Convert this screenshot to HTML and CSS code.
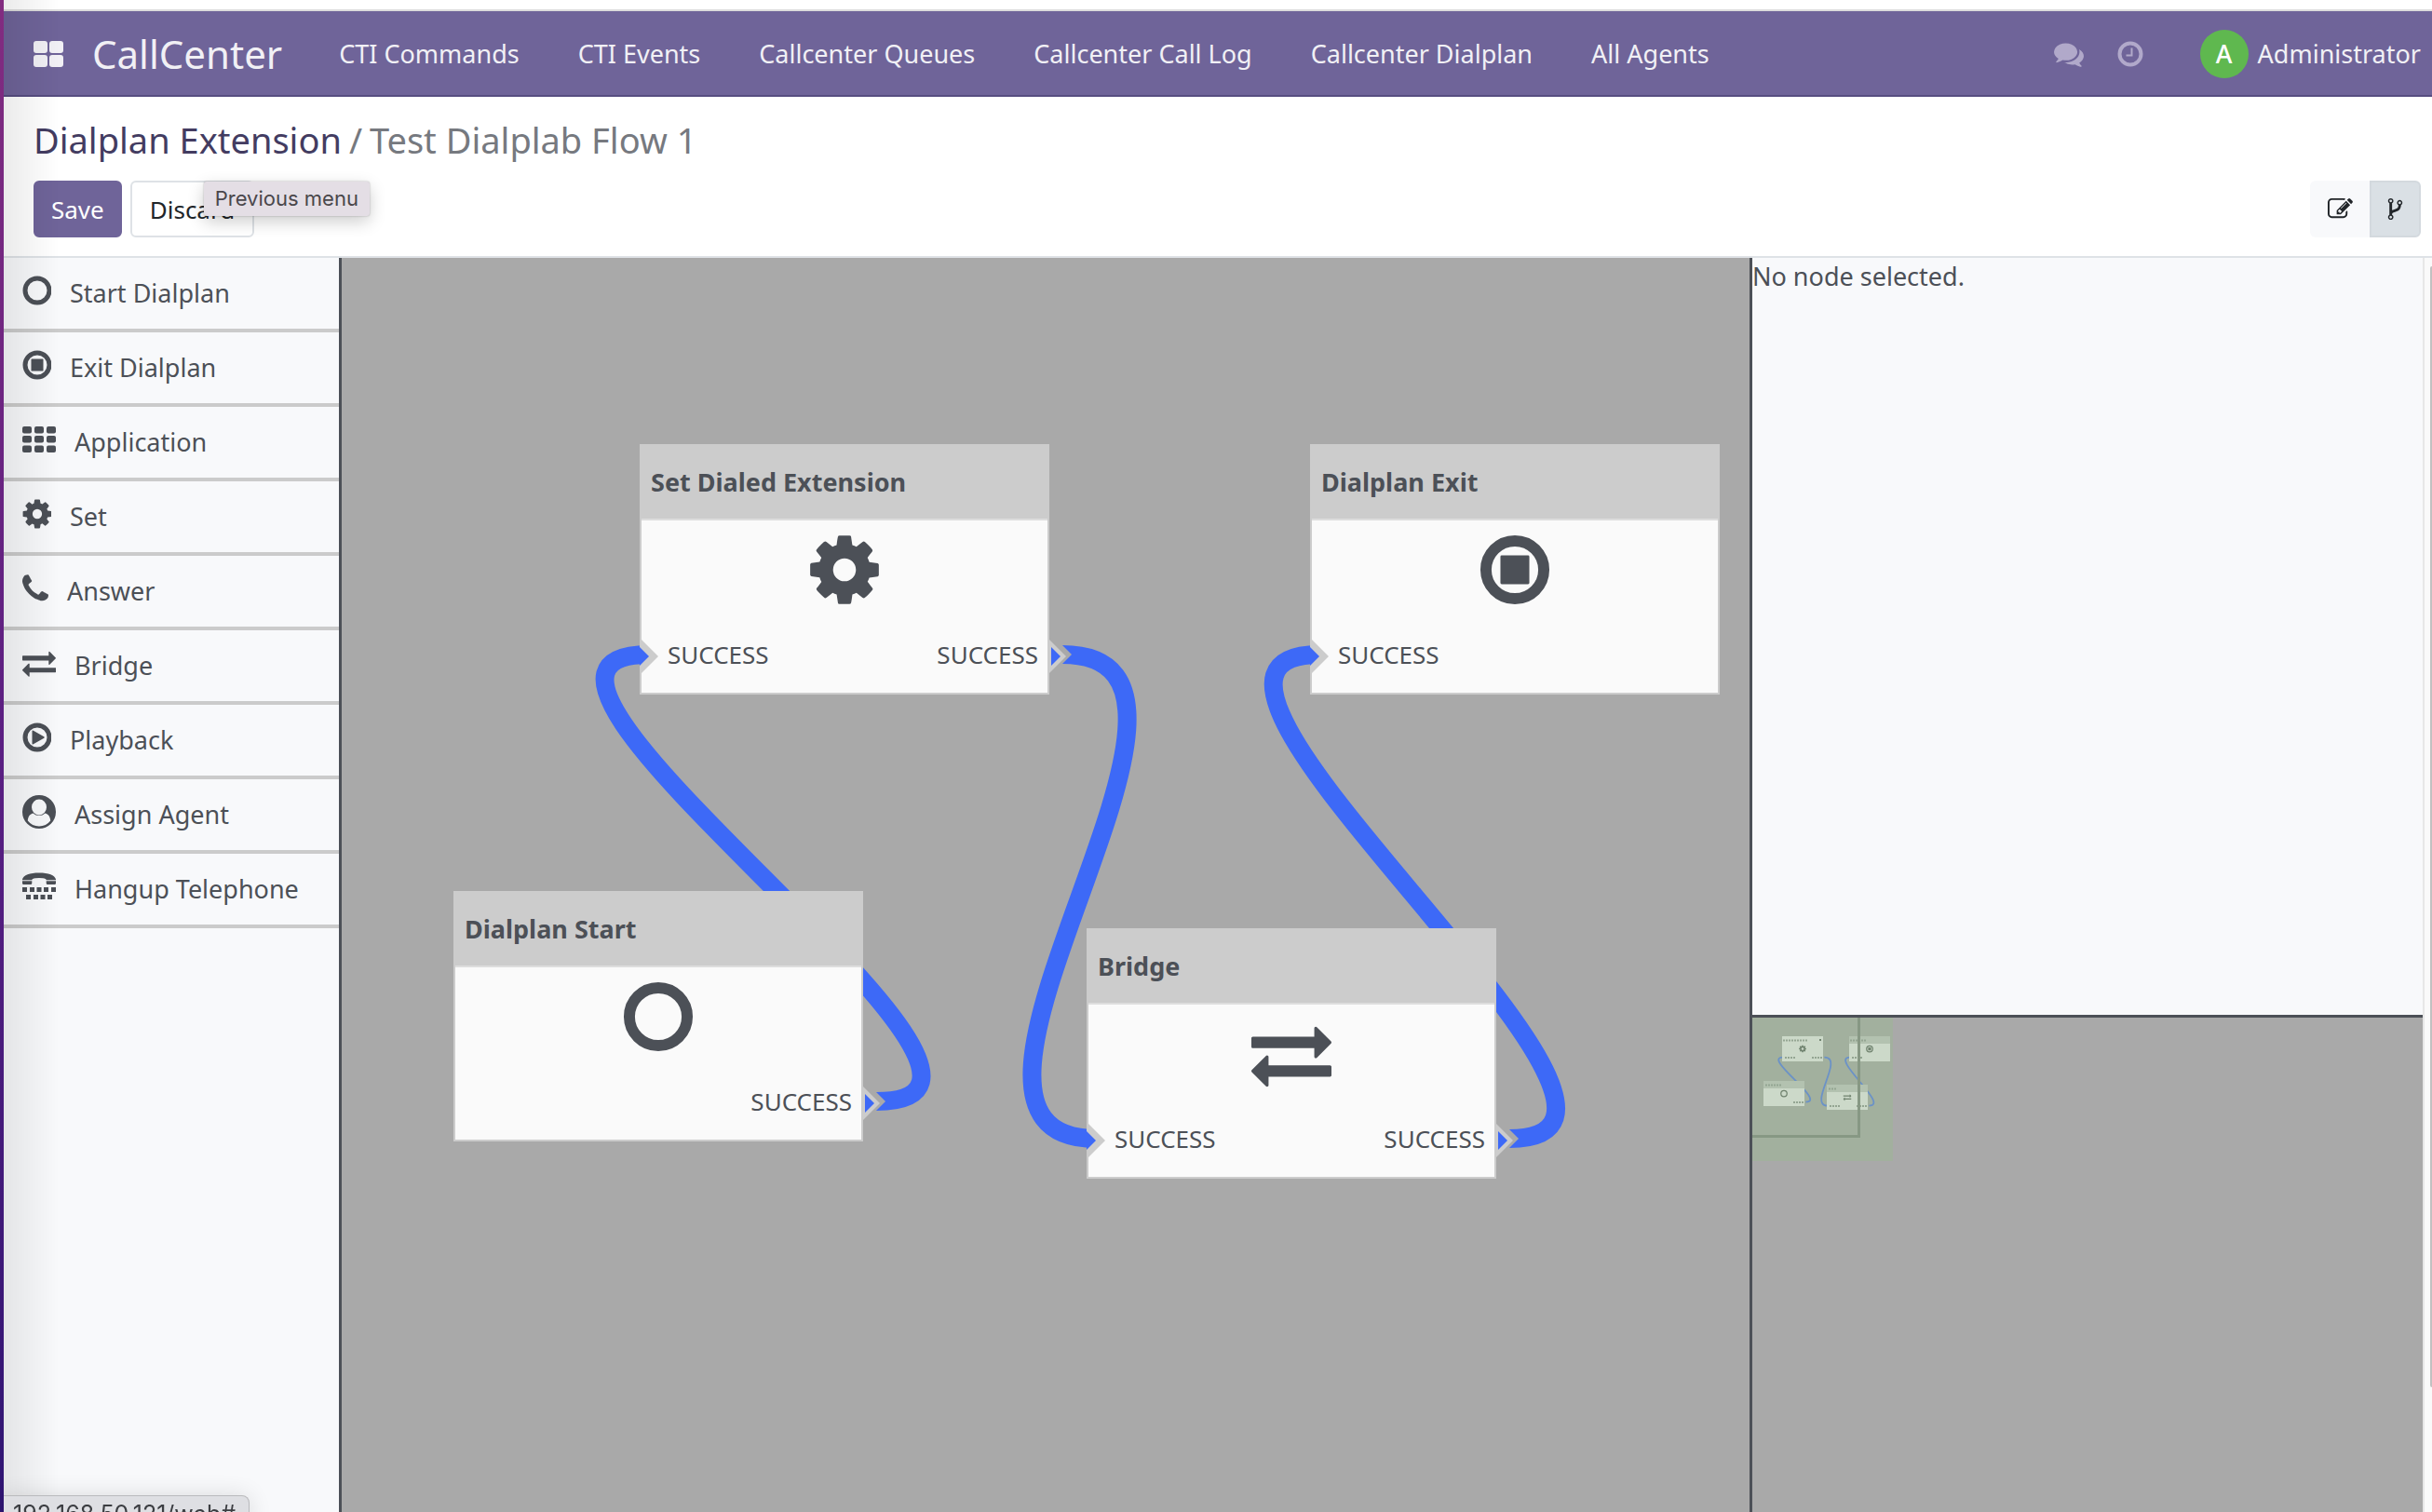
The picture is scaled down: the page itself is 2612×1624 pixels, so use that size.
FILE: index.html
```html
<!DOCTYPE html>
<html lang="en">
<head>
<meta charset="utf-8">
<title>CallCenter - Dialplan Extension</title>
<link rel="stylesheet" href="styles.css">
</head>
<body>
<svg class="defs" aria-hidden="true">
  <symbol id="i-circle" viewBox="0 0 36 36"><circle cx="18" cy="18" r="13" fill="none" stroke="currentColor" stroke-width="5"/></symbol>
  <symbol id="i-stop" viewBox="0 0 36 36"><circle cx="18" cy="18" r="13" fill="none" stroke="currentColor" stroke-width="5"/><rect x="11.500" y="11.500" width="13" height="13" rx="0.6"/></symbol>
  <symbol id="i-play" viewBox="0 0 36 36"><circle cx="18" cy="18" r="13" fill="none" stroke="currentColor" stroke-width="5"/><path d="M12.500 11.500q0-1.500 1.300-.8l11.500 6.600q1 .7 0 1.400l-11.500 6.600q-1.300.7-1.300-.8z"/></symbol>
  <symbol id="i-grid" viewBox="0 0 36 36"><g><rect x="0" y="4" width="10" height="7.500" rx="2"/><rect x="13" y="4" width="10" height="7.500" rx="2"/><rect x="26" y="4" width="10" height="7.500" rx="2"/><rect x="0" y="14" width="10" height="7.500" rx="2"/><rect x="13" y="14" width="10" height="7.500" rx="2"/><rect x="26" y="14" width="10" height="7.500" rx="2"/><rect x="0" y="24.500" width="10" height="7.500" rx="2"/><rect x="13" y="24.500" width="10" height="7.500" rx="2"/><rect x="26" y="24.500" width="10" height="7.500" rx="2"/></g></symbol>
  <symbol id="i-cog" viewBox="0 0 1792 1792"><path d="M1152 896q0-106-75-181t-181-75-181 75-75 181 75 181 181 75 181-75 75-181zm512-109v222q0 12-8 23t-20 13l-185 28q-19 54-39 91 35 50 107 138 10 12 10 25t-9 23q-27 37-99 108t-94 71q-12 0-26-9l-138-108q-44 23-91 38-16 136-29 186-7 28-36 28h-222q-14 0-24.500-8.500t-11.500-21.500l-28-184q-49-16-90-37l-141 107q-10 9-25 9-14 0-25-11-126-114-165-168-7-10-7-23 0-12 8-23 15-21 51-66.500t54-70.500q-27-50-41-99l-183-27q-13-2-21-12.500t-8-23.500v-222q0-12 8-23t19-13l186-28q14-46 39-92-40-57-107-138-10-12-10-24 0-10 9-23 26-36 98.500-107.500t94.500-71.500q13 0 26 10l138 107q44-23 91-38 16-136 29-186 7-28 36-28h222q14 0 24.500 8.500t11.500 21.500l28 184q49 16 90 37l142-107q9-9 24-9 13 0 25 10 129 119 165 170 7 8 7 22 0 12-8 23-15 21-51 66.500t-54 70.500q26 50 41 98l183 28q13 2 21 12.500t8 23.500z"/></symbol>
  <symbol id="i-phone" viewBox="192 128 1408 1536"><path d="M1600 1240q0 27-10 70.500t-21 68.500q-21 50-122 106-94 51-186 51-27 0-53-3.500t-57.500-12.500-47-14.500-55.500-20.500-49-18q-98-35-175-83-127-79-264-216t-216-264q-48-77-83-175-3-9-18-49t-20.500-55.500-14.500-47-12.500-57.500-3.500-53q0-92 51-186 56-101 106-122 25-11 68.500-21t70.500-10q14 0 21 3 18 6 53 76 11 19 30 54t35 63.500 31 53.500q3 4 17.500 25t21.500 35.500 7 28.500q0 20-28.500 50t-62 55-62 53-28.500 46q0 9 5 22.500t8.500 20.500 14 24 11.500 19q76 137 174 235t235 174q2 1 19 11.500t24 14 20.500 8.500 22.500 5q18 0 46-28.500t53-62 55-62 50-28.500q14 0 28.500 7t35.500 21.500 25 17.500q25 15 53.500 31t63.500 35 54 30q70 35 76 53 3 7 3 21z"/></symbol>
  <symbol id="i-exchange" viewBox="0 0 1792 1792"><path d="M1792 1184v192q0 13-9.500 22.500t-22.500 9.500h-1376v192q0 13-9.500 22.500t-22.500 9.500q-12 0-24-10l-319-320q-9-9-9-22 0-14 9-23l320-320q9-9 23-9 13 0 22.500 9.500t9.500 22.500v192h1376q13 0 22.500 9.500t9.500 22.500zm0-544q0 14-9 23l-320 320q-9 9-23 9-13 0-22.500-9.500t-9.500-22.500v-192h-1376q-13 0-22.500-9.500t-9.500-22.500v-192q0-13 9.500-22.500t22.500-9.500h1376v-192q0-14 9-23t23-9q12 0 24 10l319 319q9 9 9 23z"/></symbol>
  <symbol id="i-user" viewBox="0 0 36 36"><path fill-rule="evenodd" d="M18 0a18 18 0 1 1 0 36a18 18 0 1 1 0-36zM18 4.500a8 8.500 0 1 0 0 17a8 8.500 0 1 0 0-17zM11.500 19.500C7.500 20.500 6 24 5.800 27.500A15.500 15.500 0 0 0 18 33.500A15.500 15.500 0 0 0 30.200 27.500C30 24 28.500 20.500 24.500 19.500A9.500 9.500 0 0 1 11.500 19.500z"/></symbol>
  <symbol id="i-tty" viewBox="0 0 36 36"><path d="M0 10.500C1 6 8 3.500 18 3.500S35 6 36 10.500V11.200H25.700Q25.700 9.500 22 9.200Q18 8.800 14 9.200Q10.300 9.500 10.300 11.200H0zM0 12.300H10.300V14.500Q10.300 16 9 16H1.300Q0 16 0 14.500zM25.700 12.300H36V14.500Q36 16 34.700 16H27Q25.700 16 25.700 14.500z"/><path d="M0 19h5v5H0zM8 19h5v5H8zM15.500 19h5v5h-5zM23 19h5v5h-5zM31 19h5v5h-5zM4 27h5v5H4zM12 27h5v5h-5zM19.500 27h5v5h-5zM27 27h5v5h-5z"/></symbol>
  <symbol id="i-comments" viewBox="0 0 1792 1792"><path d="M1408 768q0 139-94 257t-256.500 186.500-353.500 68.500q-86 0-176-16-124 88-278 128-36 9-86 16h-3q-11 0-20.500-8t-11.500-21q-1-3-1-6.500t.5-6.500 2-6l2.500-5 3.500-5.500 4-5 4.500-5 4-4.500q5-6 23-25t26-29.500 22.500-29 25-38.500 20.500-44q-124-72-195-177t-71-224q0-139 94-257t256.500-186.500 353.500-68.500 353.500 68.500 256.500 186.500 94 257zm384 256q0 120-71 224.500t-195 176.500q10 24 20.500 44t25 38.500 22.500 29 26 29.500 23 25q1 1 4 4.500t4.500 5 4 5 3.500 5.500l2.500 5 2 6 .5 6.500-1 6.500q-3 14-13 22t-22 7q-50-7-86-16-154-40-278-128-90 16-176 16-271 0-472-132 58 4 88 4 161 0 309-45t264-129q125-92 192-212t67-254q0-77-23-152 129 71 204 178t75 230z"/></symbol>
  <symbol id="i-clock" viewBox="0 0 32 32"><circle cx="16" cy="16" r="11.500" fill="none" stroke="currentColor" stroke-width="4"/><path d="M17.500 9.500v8h-6" fill="none" stroke="currentColor" stroke-width="2"/></symbol>
  <symbol id="i-edit" viewBox="0 0 1792 1792"><path d="M888 1184l116-116-152-152-116 116v56h96v96h56zm440-720q-16-16-33 1l-350 350q-17 17-1 33t33-1l350-350q17-17 1-33zm80 594v190q0 119-84.500 203.500t-203.500 84.500h-832q-119 0-203.500-84.500t-84.500-203.500v-832q0-119 84.500-203.500t203.500-84.500h832q63 0 117 25 15 7 18 23 3 17-9 29l-49 49q-14 14-32 8-23-6-45-6h-832q-66 0-113 47t-47 113v832q0 66 47 113t113 47h832q66 0 113-47t47-113v-126q0-13 9-22l64-64q15-15 35-7t20 29zm-96-738l288 288-672 672h-288v-288zm444 132l-92 92-288-288 92-92q28-28 68-28t68 28l152 152q28 28 28 68t-28 68z"/></symbol>
  <symbol id="i-fork" viewBox="0 0 1792 1792"><path d="M672 1472q0-40-28-68t-68-28-68 28-28 68 28 68 68 28 68-28 28-68zm0-1152q0-40-28-68t-68-28-68 28-28 68 28 68 68 28 68-28 28-68zm640 128q0-40-28-68t-68-28-68 28-28 68 28 68 68 28 68-28 28-68zm96 0q0 52-26 96.500t-70 69.500q-2 287-226 414-67 38-203 81-128 40-169.500 71t-41.500 100v26q44 25 70 69.500t26 96.500q0 80-56 136t-136 56-136-56-56-136q0-52 26-96.500t70-69.500v-820q-44-25-70-69.500t-26-96.500q0-80 56-136t136-56 136 56 56 136q0 52-26 96.500t-70 69.500v497q54-26 154-57 55-17 87.500-29.500t70.500-31 59-39.500 40.500-51 28-69.500 8.500-91.500q-44-25-70-69.500t-26-96.500q0-80 56-136t136-56 136 56 56 136z"/></symbol>
</svg>

<div class="app">
  <header class="navbar">
    <button class="apps" type="button" aria-label="Applications">
      <svg viewBox="0 0 32 28"><rect width="15" height="13" rx="3"/><rect x="17" width="15" height="13" rx="3"/><rect y="15" width="15" height="13" rx="3"/><rect x="17" y="15" width="15" height="13" rx="3"/></svg>
    </button>
    <a class="brand" href="#">CallCenter</a>
    <nav class="menu">
      <a href="#">CTI Commands</a>
      <a href="#">CTI Events</a>
      <a href="#">Callcenter Queues</a>
      <a href="#">Callcenter Call Log</a>
      <a href="#">Callcenter Dialplan</a>
      <a href="#">All Agents</a>
    </nav>
    <div class="systray">
      <button type="button" aria-label="Conversations"><svg><use href="#i-comments"/></svg></button>
      <button type="button" aria-label="Activities"><svg><use href="#i-clock"/></svg></button>
    </div>
    <button class="user" type="button"><span class="avatar">A</span><span>Administrator</span></button>
  </header>

  <section class="control">
    <div class="crumbs"><a href="#">Dialplan Extension</a><span>/</span><span>Test Dialplab Flow 1</span></div>
    <div class="actions">
      <button class="btn primary" type="button">Save</button>
      <div class="anchor">
        <button class="btn" type="button">Discard</button>
        <div class="tooltip" role="tooltip">Previous menu</div>
      </div>
      <div class="views">
        <button type="button" aria-label="Form view"><svg><use href="#i-edit"/></svg></button>
        <button class="active" type="button" aria-label="Diagram view"><svg><use href="#i-fork"/></svg></button>
      </div>
    </div>
  </section>

  <main class="workspace">
    <aside class="palette">
      <button type="button"><svg class="narrow" viewBox="2 0 31 36"><use href="#i-circle" width="36" height="36"/></svg>Start Dialplan</button>
      <button type="button"><svg class="narrow" viewBox="2 0 31 36"><use href="#i-stop" width="36" height="36"/></svg>Exit Dialplan</button>
      <button type="button"><svg><use href="#i-grid"/></svg>Application</button>
      <button type="button"><svg class="narrow" viewBox="2 0 31 36"><use href="#i-cog" width="36" height="36"/></svg>Set</button>
      <button type="button"><svg class="phone"><use href="#i-phone"/></svg>Answer</button>
      <button type="button"><svg><use href="#i-exchange"/></svg>Bridge</button>
      <button type="button"><svg class="narrow" viewBox="2 0 31 36"><use href="#i-play" width="36" height="36"/></svg>Playback</button>
      <button type="button"><svg><use href="#i-user"/></svg>Assign Agent</button>
      <button type="button"><svg><use href="#i-tty"/></svg>Hangup Telephone</button>
    </aside>

    <section class="canvas">
      <svg class="links">
        <g class="wire">
          <path d="M574 906C810 906 97 426 330 426"/>
          <path d="M774 426C999 426 587 946 810 946"/>
          <path d="M1254 946C1487 946 819 426 1050 426"/>
        </g>
        <g class="notch">
          <path d="M574 896l10 10l-10 10z"/>
          <path d="M774 416l10 10l-10 10z"/>
          <path d="M1254 936l10 10l-10 10z"/>
        </g>
      </svg>
      <article class="node n-set">
        <h2>Set Dialed Extension</h2>
        <svg class="glyph"><use href="#i-cog"/></svg>
        <div class="ports"><span>SUCCESS</span><span>SUCCESS</span></div>
        <svg class="port in" viewBox="0 0 20 36"><path d="M2 0L20 18L2 36z"/><path class="live" d="M0 8L10 18L0 28z"/></svg>
        <svg class="port out" viewBox="0 0 20 36"><path d="M0 0L18 18L0 36z"/><path class="live" d="M2 8L12 18L2 28z"/></svg>
      </article>
      <article class="node n-exit">
        <h2>Dialplan Exit</h2>
        <svg class="glyph"><use href="#i-stop"/></svg>
        <div class="ports"><span>SUCCESS</span></div>
        <svg class="port in" viewBox="0 0 20 36"><path d="M2 0L20 18L2 36z"/><path class="live" d="M0 8L10 18L0 28z"/></svg>
      </article>
      <article class="node n-start">
        <h2>Dialplan Start</h2>
        <svg class="glyph"><use href="#i-circle"/></svg>
        <div class="ports"><span></span><span>SUCCESS</span></div>
        <svg class="port out" viewBox="0 0 20 36"><path d="M0 0L18 18L0 36z"/><path class="live" d="M2 8L12 18L2 28z"/></svg>
      </article>
      <article class="node n-bridge">
        <h2>Bridge</h2>
        <svg class="glyph"><use href="#i-exchange"/></svg>
        <div class="ports"><span>SUCCESS</span><span>SUCCESS</span></div>
        <svg class="port in" viewBox="0 0 20 36"><path d="M2 0L20 18L2 36z"/><path class="live" d="M0 8L10 18L0 28z"/></svg>
        <svg class="port out" viewBox="0 0 20 36"><path d="M0 0L18 18L0 36z"/><path class="live" d="M2 8L12 18L2 28z"/></svg>
      </article>
    </section>

    <aside class="side">
      <div class="inspector">No node selected.</div>
      <div class="overview">
        <svg viewBox="0 0 151 154" aria-hidden="true">
          <rect class="m-bg" width="151" height="154"/>
          <g class="m-wire" transform="scale(.1)">
            <path d="M574 906C810 906 97 426 330 426"/>
            <path d="M774 426C999 426 587 946 810 946"/>
            <path d="M1254 946C1487 946 819 426 1050 426"/>
          </g>
          <g class="m-node"><rect x="32" y="20" width="44" height="27"/><rect x="104" y="20" width="44" height="27"/><rect x="12" y="68" width="44" height="27"/><rect x="80" y="72" width="44" height="27"/></g>
          <g class="m-head"><rect x="104" y="20" width="44" height="8"/><rect x="12" y="68" width="44" height="8"/><rect x="80" y="72" width="44" height="8"/></g>
          <g class="m-ink">
            <use href="#i-cog" x="49.500" y="29" width="9" height="9"/><use href="#i-stop" x="121.500" y="29" width="9" height="9"/><use href="#i-circle" x="29.500" y="77" width="9" height="9"/><use href="#i-exchange" x="97.500" y="81" width="9" height="9"/>
            <rect x="72" y="23" width="2" height="2"/>
            <path d="M33 24.500h27M105 24.500h17M14 72.500h18M82 76.500h9M35 43h11M64 43h11M107 43h11M44 91h11M83 95h11M112 95h11"/>
          </g>
          <path class="m-view" d="M114.500 0V127.500H0"/>
        </svg>
      </div>
    </aside>
    <div class="gutter"><div class="thumb"></div></div>
  </main>
</div>
<div class="edge"></div>
<div class="status">192.168.50.121/web#</div>
</body>
</html>
```
FILE: styles.css
```css
* { box-sizing: border-box; }

body {
  margin: 0;
  height: 100vh;
  overflow: hidden;
  background: #fff;
  color: #4c5057;
  font: 27px/36px "Noto Sans", "Open Sans", sans-serif;
}

button {
  margin: 0;
  padding: 0;
  border: 0;
  background: none;
  color: inherit;
  font: inherit;
}

a { color: inherit; text-decoration: none; }
svg { display: block; fill: currentColor; }
.defs { position: absolute; width: 0; height: 0; }

.app {
  display: flex;
  flex-direction: column;
  height: 100%;
  margin-left: 4px;
  padding-top: 10px;
}

/* Top bar */
.navbar {
  display: flex;
  align-items: center;
  flex: none;
  height: 94px;
  padding: 2px 12px 0 32px;
  border-top: 2px solid #dcdcdc;
  border-bottom: 2px solid #574d80;
  background: #6f6499;
  color: #f1f0f5;
}
.apps svg { width: 32px; height: 28px; }
.brand { margin-left: 31px; font-size: 42px; line-height: 56px; }
.menu { display: flex; gap: 63px; margin-left: 61px; }
.systray {
  display: flex;
  gap: 34px;
  margin-left: auto;
  color: #b1a9ca;
}
.systray svg { width: 32px; height: 32px; }
.user { display: flex; align-items: center; gap: 10px; margin-left: 59px; }
.avatar {
  width: 52px;
  border-radius: 50%;
  background: #5fb84f;
  color: #fff;
  font-weight: 500;
  line-height: 52px;
}

/* Breadcrumb and buttons */
.control {
  flex: none;
  height: 173px;
  padding: 20px 12px 0 32px;
  border-bottom: 2px solid #dee2e6;
}
.crumbs {
  display: flex;
  gap: 8px;
  color: #76797f;
  font-size: 38px;
  line-height: 52px;
}
.crumbs a { color: #433c61; }
.actions { display: flex; gap: 9px; margin-top: 18px; color: #212529; }
.btn {
  height: 61px;
  padding: 0 19px;
  border: 2px solid #dee2e6;
  border-radius: 6px;
  background: #fff;
  font-size: 26px;
}
.primary { padding: 0 17px; border-color: #6f6499; background: #6f6499; color: #fff; }
.anchor { position: relative; }
.tooltip {
  position: absolute;
  top: 1px;
  left: 79px;
  padding: 0 12px;
  border-radius: 3px;
  background: #e4dee5;
  box-shadow: 0 0 2px rgba(0, 0, 0, .3), 0 6px 18px rgba(0, 0, 0, .2);
  color: #4a474b;
  font: 22px/37px Inter, "Liberation Sans", sans-serif;
  white-space: nowrap;
}
.views { display: flex; margin-left: auto; }
.views button {
  display: grid;
  place-items: center;
  width: 64px;
  height: 61px;
  border-radius: 6px 0 0 6px;
  background: #f8f9fb;
}
.views .active {
  width: 55px;
  border: 2px solid #d3d9de;
  border-radius: 0 6px 6px 0;
  background: #dae0e5;
}
.views svg { width: 27px; height: 27px; }

/* Workspace */
.workspace { display: flex; flex: 1; min-height: 0; }
.palette {
  flex: none;
  width: 363px;
  border-right: 3px solid #4c5057;
  background: #f8f9fb;
}
.palette button {
  display: flex;
  align-items: center;
  gap: 20px;
  width: 100%;
  height: 80px;
  padding: 0 20px;
  border-bottom: 4px solid #cbcbcb;
}
.palette svg { width: 36px; height: 36px; margin-bottom: 6px; }
.palette .narrow { width: 31px; }
.palette .phone { width: 28px; height: 31px; }

.canvas {
  position: relative;
  flex: 1;
  min-width: 0;
  overflow: hidden;
  background: #a9a9a9;
}
.links { position: absolute; inset: 0; width: 100%; height: 100%; }
.wire { fill: none; stroke: #3d69f7; stroke-width: 20; }
.notch { fill: #a9a9a9; }

.node {
  position: absolute;
  display: flex;
  flex-direction: column;
  width: 440px;
  height: 269px;
  border: 2px solid #ccc;
  border-top: 0;
  background: #fafafa;
}
.n-set { left: 320px; top: 200px; }
.n-exit { left: 1040px; top: 200px; }
.n-start { left: 120px; top: 680px; }
.n-bridge { left: 800px; top: 720px; }
.node h2 {
  margin: 0;
  padding: 2px 10px 0;
  border-bottom: 2px solid #ddd;
  background: #ccc;
  font-size: 27px;
  line-height: 78px;
}
.glyph { align-self: center; width: 86px; height: 86px; margin-top: 10px; }
.ports {
  display: flex;
  justify-content: space-between;
  margin-top: 30px;
  padding: 0 10px 0 28px;
  font-size: 26px;
}
.port { position: absolute; top: 210px; width: 20px; height: 36px; fill: #ccc; }
.in { left: -2px; }
.out { right: -22px; }
.live { fill: #3d69f7; }

.side {
  display: grid;
  grid-template-rows: 35fr 23fr;
  flex: none;
  width: 723px;
  border-left: 3px solid #4c5057;
}
.inspector { padding-top: 2px; background: #f8f9fb; }
.overview { border-top: 3px solid #4c5057; background: #a9a9a9; }
.overview svg { width: 151px; height: 154px; }
.m-bg { fill: #a2b09e; }
.m-wire { fill: none; stroke: #6b92c7; stroke-width: 18; }
.m-node { fill: #ccd9c9; }
.m-head { fill: #b3c2b0; }
.m-ink { color: #70836f; }
.m-ink > path { stroke: #94a592; stroke-width: 2; stroke-dasharray: 2 1; }
.m-view { fill: none; stroke: #879884; stroke-width: 3; }

.gutter {
  flex: none;
  width: 10px;
  padding: 9px 0 0 6px;
  border-left: 2px solid #e7e7e7;
  background: #fafafa;
}
.thumb { height: 90%; border-radius: 2px 0 0 2px; background: #c1c1c1; }

/* Window edge: coloured strip and the shadow beside it */
.edge {
  position: fixed;
  inset: 0 auto 0 0;
  width: 64px;
  border-left: 4px solid;
  border-image: linear-gradient(#822c80, #5a1f82 50%, #2f1573) 1;
  background: linear-gradient(90deg, rgba(0, 0, 0, .08), transparent);
  pointer-events: none;
}

.status {
  position: fixed;
  left: 4px;
  bottom: -22px;
  padding: 0 14px 0 10px;
  border: 1px solid #b9babd;
  border-left: 0;
  border-radius: 0 8px 0 0;
  background: #dedfe3;
  box-shadow: 0 0 24px rgba(0, 0, 0, .12);
  color: #3c3e42;
  font: 25px/38px Inter, "Liberation Sans", sans-serif;
}
```
